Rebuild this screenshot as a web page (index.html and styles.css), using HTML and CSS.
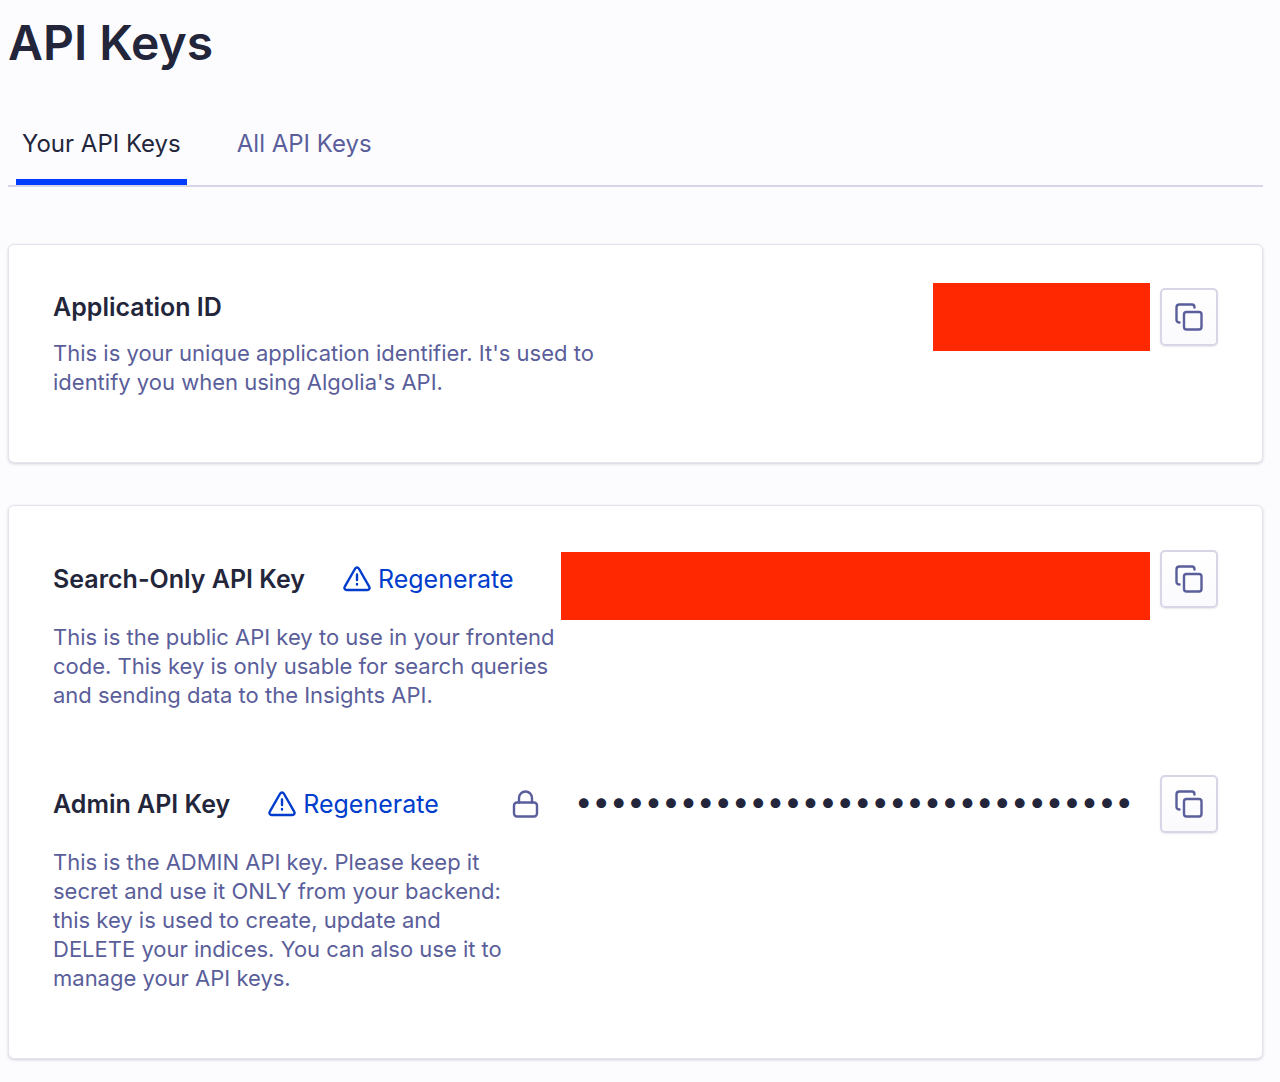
FILE: index.html
```html
<!DOCTYPE html>
<html lang="en">
<head>
<meta charset="utf-8">
<meta name="viewport" content="width=device-width, initial-scale=1">
<title>API Keys</title>
<link rel="stylesheet" href="styles.css">
</head>
<body>
<svg class="sprite" aria-hidden="true">
  <symbol id="icon-copy" viewBox="0 0 28 28">
    <rect x="9" y="9" width="17.500" height="17.500" rx="2.500"/>
    <path d="M4.500 19.500C2.800 19.500 1.500 18.300 1.500 17V4.500C1.500 2.800 2.800 1.500 4.500 1.500H17C18.500 1.500 19.500 2.500 19.500 4.500"/>
  </symbol>
  <symbol id="icon-alert" viewBox="0 0 28 28">
    <path d="M12.200 3.500 1.800 21.600A2.200 2.200 0 0 0 3.700 25H24.300A2.200 2.200 0 0 0 26.200 21.600L15.800 3.500A2.100 2.100 0 0 0 12.200 3.500Z"/>
    <path d="M14 9.500V15M14 19V19.500"/>
  </symbol>
  <symbol id="icon-lock" viewBox="0 0 28 28">
    <rect x="3" y="12.500" width="23" height="14" rx="3"/>
    <path d="M8 12.500V8A6.500 6.500 0 0 1 21 8V12.500"/>
  </symbol>
</svg>
<main class="page">
  <h1 class="title">API Keys</h1>
  <nav class="tabs" aria-label="API key views">
    <a class="tab tab-active" href="#your-keys" aria-current="page">Your API Keys</a>
    <a class="tab" href="#all-keys">All API Keys</a>
  </nav>

  <section class="card card-app">
    <div class="row">
      <div class="info info-app">
        <h2 class="name">Application ID</h2>
        <p class="text">This is your unique application identifier. It's used to identify you when using Algolia's API.</p>
      </div>
      <div class="field field-app">
        <div class="redacted redacted-short"></div>
        <button class="copy" type="button" aria-label="Copy Application ID"><svg class="icon"><use href="#icon-copy"/></svg></button>
      </div>
    </div>
  </section>

  <section class="card card-keys">
    <div class="row">
      <div class="info info-search">
        <div class="head">
          <h2 class="name">Search-Only API Key</h2>
          <button class="regen" type="button"><svg class="icon"><use href="#icon-alert"/></svg>Regenerate</button>
        </div>
        <p class="text">This is the public API key to use in your frontend code. This key is only usable for search queries and sending data to the Insights API.</p>
      </div>
      <div class="field field-search">
        <div class="redacted redacted-long"></div>
        <button class="copy" type="button" aria-label="Copy Search-Only API Key"><svg class="icon"><use href="#icon-copy"/></svg></button>
      </div>
    </div>
    <div class="row">
      <div class="info info-admin">
        <div class="head">
          <h2 class="name">Admin API Key</h2>
          <button class="regen" type="button"><svg class="icon"><use href="#icon-alert"/></svg>Regenerate</button>
        </div>
        <p class="text">This is the ADMIN API key. Please keep it secret and use it ONLY from your backend: this key is used to create, update and DELETE your indices. You can also use it to manage your API keys.</p>
      </div>
      <div class="field field-admin">
        <svg class="icon lock"><use href="#icon-lock"/></svg>
        <input class="secret" type="password" value="00000000000000000000000000000000" aria-label="Admin API Key" readonly>
        <button class="copy" type="button" aria-label="Copy Admin API Key"><svg class="icon"><use href="#icon-copy"/></svg></button>
      </div>
    </div>
  </section>
</main>
</body>
</html>
```
FILE: styles.css
```css
* { box-sizing: border-box; }

body {
  margin: 0;
  background: #fcfcff;
  color: #23263b;
  font-family: Inter, "Liberation Sans", sans-serif;
}

h1, h2, p { margin: 0; }

button {
  font: inherit;
  cursor: pointer;
}

.sprite {
  position: absolute;
  width: 0;
  height: 0;
}

.icon {
  flex: none;
  width: 28px;
  height: 28px;
  fill: none;
  stroke: currentColor;
  stroke-width: 2.4;
  stroke-linecap: round;
  stroke-linejoin: round;
}

.page { padding: 12px 17px 22px 8px; }

.title {
  font-size: 48px;
  font-weight: 600;
  line-height: 62px;
}

.tabs {
  display: flex;
  gap: 44px;
  margin-top: 42px;
  padding: 0 8px;
  border-bottom: 2px solid #d6d6e7;
}

.tab {
  height: 69px;
  padding: 12px 6px;
  border-bottom: 6px solid transparent;
  color: #5a5e9a;
  font-size: 24px;
  line-height: 32px;
  text-decoration: none;
}

.tab-active {
  border-color: #003dff;
  color: #23263b;
}

.card {
  background: #fff;
  border: 1px solid #e4e4ec;
  border-radius: 6px;
  box-shadow: 0 1px 3px rgba(35, 38, 59, 0.2);
}

.card-app {
  margin-top: 57px;
  padding: 38px 44px 0;
}

.card-keys {
  margin-top: 42px;
  padding: 44px 44px 0;
}

.row {
  display: flex;
  justify-content: space-between;
  padding-bottom: 65px;
}

.info-app {
  width: 550px;
  padding-top: 8px;
}

.info-app .text { margin-top: 16px; }

.info-search { width: 508px; }

.info-admin { width: 458px; }

.head {
  display: flex;
  align-items: center;
  gap: 38px;
  height: 58px;
  margin-bottom: 15px;
}

.name {
  font-size: 25px;
  font-weight: 600;
  line-height: 32px;
  white-space: nowrap;
}

.text {
  color: #5a5e9a;
  font-size: 22px;
  line-height: 29px;
}

.regen {
  display: flex;
  align-items: center;
  gap: 7px;
  padding: 0;
  border: 0;
  background: none;
  color: #003dcc;
  font-size: 25px;
  line-height: 32px;
}

.field {
  display: flex;
  align-items: flex-start;
  gap: 10px;
}

.field-app {
  align-items: center;
  height: 68px;
}

.field-search { flex: 1; }

.field-admin {
  flex: 1;
  align-items: center;
  height: 58px;
}

.redacted {
  height: 68px;
  background: #ff2800;
}

.redacted-short { width: 217px; }

.redacted-long {
  flex: 1;
  margin-top: 2px;
}

.copy {
  display: flex;
  flex: none;
  align-items: center;
  justify-content: center;
  width: 58px;
  height: 58px;
  padding: 0;
  border: 2px solid #d6d6e7;
  border-radius: 5px;
  background: linear-gradient(#fff, #fafafd);
  box-shadow: 0 1px 2px rgba(35, 38, 59, 0.1);
  color: #5a5e9a;
}

.lock { color: #5a5e9a; }

.secret {
  flex: 1;
  min-width: 0;
  padding: 0 0 6px 26px;
  border: 0;
  background: none;
  color: #23263b;
  font: 31px/38px Inter, sans-serif;
}
```
